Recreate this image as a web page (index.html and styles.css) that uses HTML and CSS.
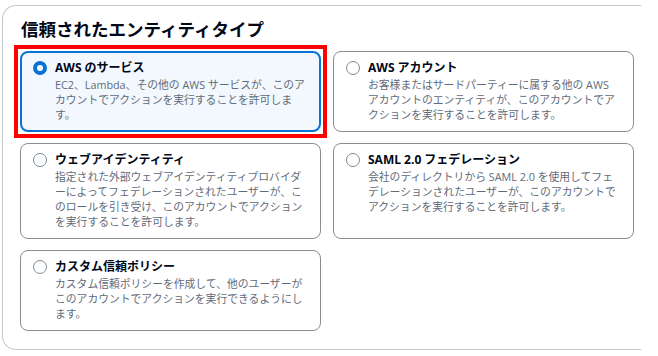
FILE: index.html
```html
<!DOCTYPE html>
<html lang="ja">
<head>
<meta charset="utf-8">
<link rel="stylesheet" href="styles.css">
</head>
<body>
<section class="panel">
  <h2 class="panel-title">信頼されたエンティティタイプ</h2>
  <div class="tiles">
    <div class="tile tile-selected">
      <span class="radio radio-on"></span>
      <div class="tile-body">
        <div class="tile-title">AWS のサービス</div>
        <div class="tile-desc">EC2、Lambda、その他の AWS サービスが、このアカウントでアクションを実行することを許可します。</div>
      </div>
    </div>
    <div class="tile">
      <span class="radio"></span>
      <div class="tile-body">
        <div class="tile-title">AWS アカウント</div>
        <div class="tile-desc">お客様またはサードパーティーに属する他の AWS アカウントのエンティティが、このアカウントでアクションを実行することを許可します。</div>
      </div>
    </div>
    <div class="tile">
      <span class="radio"></span>
      <div class="tile-body">
        <div class="tile-title">ウェブアイデンティティ</div>
        <div class="tile-desc">指定された外部ウェブアイデンティティプロバイダーによってフェデレーションされたユーザーが、このロールを引き受け、このアカウントでアクションを実行することを許可します。</div>
      </div>
    </div>
    <div class="tile">
      <span class="radio"></span>
      <div class="tile-body">
        <div class="tile-title">SAML 2.0 フェデレーション</div>
        <div class="tile-desc">会社のディレクトリから SAML 2.0 を使用してフェデレーションされたユーザーが、このアカウントでアクションを実行することを許可します。</div>
      </div>
    </div>
    <div class="tile">
      <span class="radio"></span>
      <div class="tile-body">
        <div class="tile-title">カスタム信頼ポリシー</div>
        <div class="tile-desc">カスタム信頼ポリシーを作成して、他のユーザーがこのアカウントでアクションを実行できるようにします。</div>
      </div>
    </div>
  </div>
</section>
</body>
</html>
```

FILE: styles.css
```css
* { box-sizing: border-box; }
html, body { margin: 0; padding: 0; background: #ffffff; }
body {
  font-family: "Open Sans", "Noto Sans CJK JP", sans-serif;
  color: #000716;
}
.panel {
  margin: 5px 0 0 2px;
  width: 639px;
  height: 345px;
  border: 1px solid #c6c6cd;
  border-right: none;
  border-radius: 14px 0 0 14px;
  padding: 11px 8px 0 17px;
  background: #fff;
}
.panel-title {
  margin: 0 0 10px 1px;
  font-size: 17.5px;
  line-height: 24px;
  font-weight: 700;
  letter-spacing: 0;
}
.tiles {
  display: grid;
  grid-template-columns: 301px 301px;
  column-gap: 12px;
  row-gap: 11px;
}
.tile {
  position: relative;
  display: flex;
  align-items: flex-start;
  gap: 8px;
  border: 1px solid #8c8c94;
  border-radius: 8px;
  padding: 8px 14px 9px 12px;
  background: #fff;
}
.tile-selected {
  border: 2px solid #0972d3;
  background: #f2f8fd;
  padding: 7px 13px 8px 11px;
}
.tile-selected::after {
  content: "";
  position: absolute;
  top: -8px;
  left: -8px;
  right: -8px;
  bottom: -8px;
  border: 4px solid #ff0000;
  pointer-events: none;
}
.radio {
  flex: none;
  width: 14px;
  height: 14px;
  margin-top: 1px;
  border-radius: 50%;
  border: 1.5px solid #7d8998;
  background: #fff;
}
.radio-on {
  border: 4px solid #0972d3;
}
.tile-body { flex: 1; min-width: 0; }
.tile-title {
  font-size: 12px;
  line-height: 16px;
  font-weight: 700;
  color: #000716;
}
.tile-desc {
  margin-top: 1px;
  font-size: 10.8px;
  line-height: 15px;
  color: #5f6b7a;
}
```
